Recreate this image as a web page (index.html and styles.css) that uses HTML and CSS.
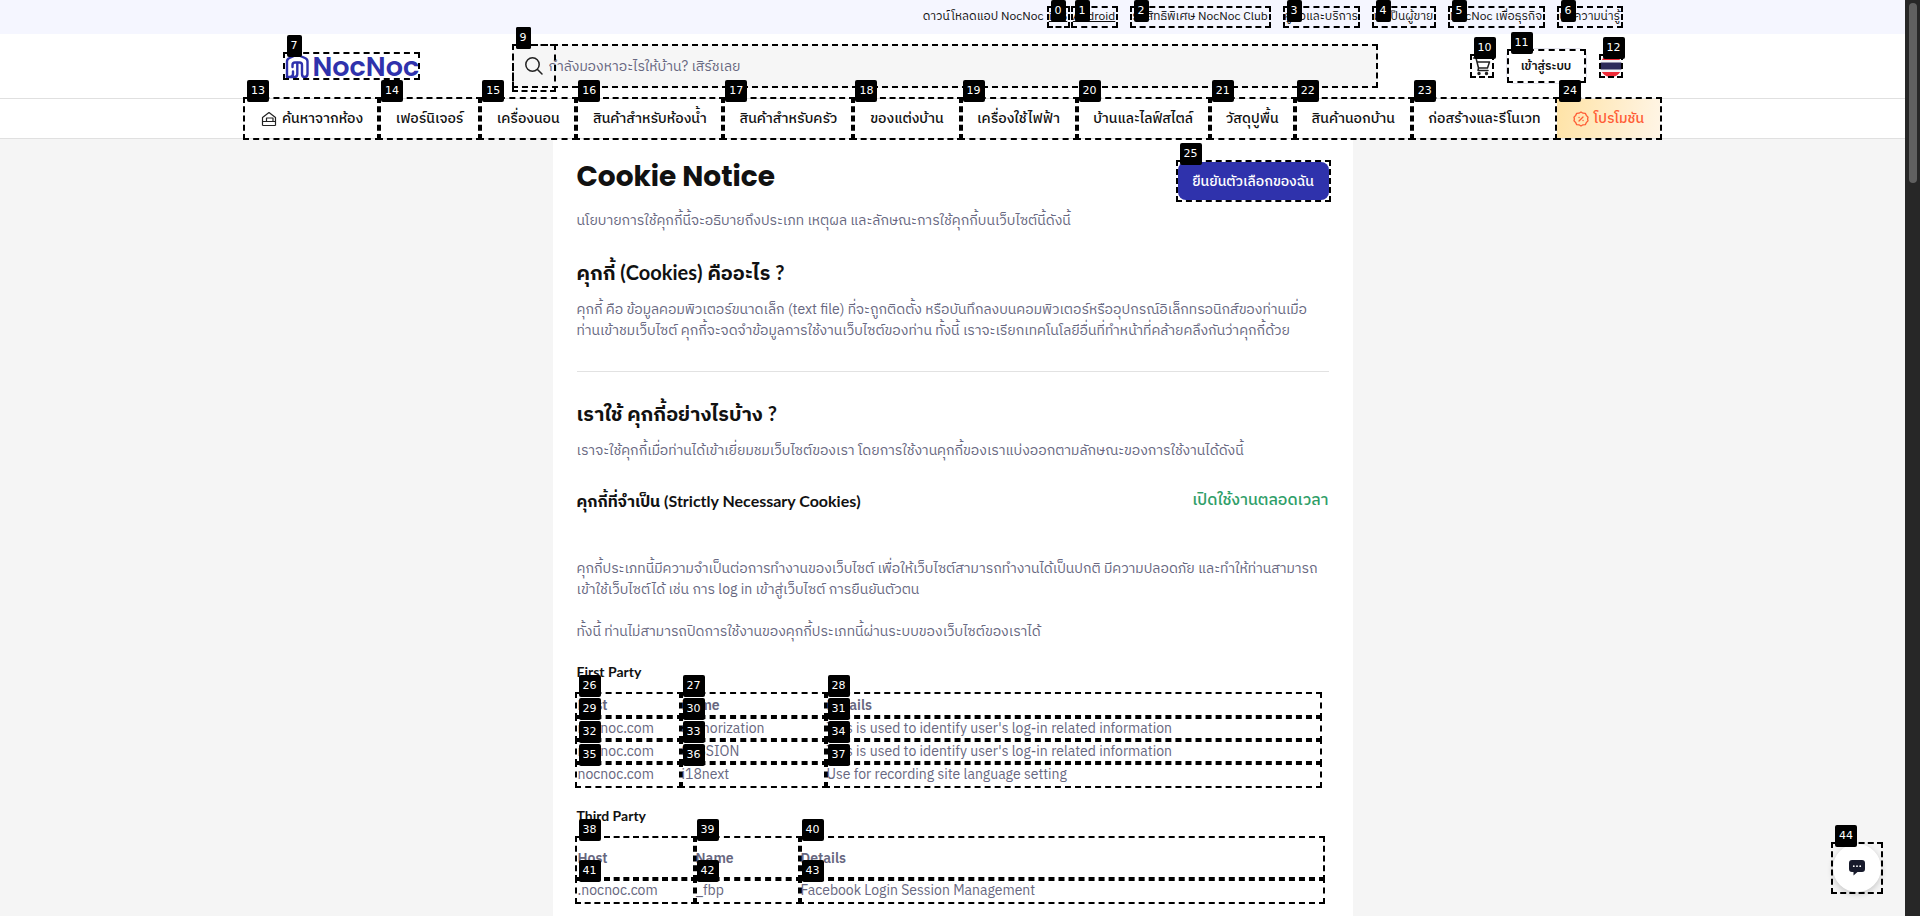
FILE: index.html
```html
<!DOCTYPE html>
<html lang="th">
<head>
<meta charset="utf-8">
<title>Cookie Notice | NocNoc</title>
<meta name="viewport" content="width=device-width, initial-scale=1">
<link rel="stylesheet" href="styles.css">
</head>
<body>
<div class="page">
  <div class="topbar">
    <div class="container topbar-row">
      <div class="apps">
        <span class="apps-label">ดาวน์โหลดแอป NocNoc</span>
        <a class="mark low top-a" href="#">iOS<span class="tag">0</span></a>
        <a class="mark low top-b" href="#">Android<span class="tag">1</span></a>
      </div>
      <a class="mark low top-c" href="#">รับสิทธิพิเศษ NocNoc Club<span class="tag">2</span></a>
      <a class="mark low top-d" href="#">คู่มือและบริการ<span class="tag">3</span></a>
      <a class="mark low top-e" href="#">มาเป็นผู้ขาย<span class="tag">4</span></a>
      <a class="mark low top-f" href="#">NocNoc เพื่อธุรกิจ<span class="tag">5</span></a>
      <a class="mark low top-g" href="#">บทความน่ารู้<span class="tag">6</span></a>
    </div>
  </div>

  <header class="header">
    <div class="container header-row">
      <a class="logo mark" href="#" aria-label="NocNoc">
        <svg class="logo-icon" viewBox="0 0 24 26" fill="none" stroke="#2f32ac" stroke-width="2.4" stroke-linejoin="round" stroke-linecap="round"><path d="M2 24V8.500Q2 6 4.500 5L10 2.500Q12 1.500 14 2.500L20 5Q22.500 6 22.500 8.500V21Q22.500 24 19.500 24Q17 24 17 21V12Q17 9.500 14.500 9.500H10Q7.500 9.500 7.500 12V14"/><path d="M2 24H4.500Q8 24 8 21V18.500M12.300 10V21Q12.300 24 9.500 24H4.500"/></svg>
        <span class="logo-text">NocNoc</span>
        <span class="tag">7</span>
      </a>
      <form class="search mark">
        <span class="tag">8</span>
        <button class="search-btn mark" type="button" aria-label="ค้นหา">
          <svg width="20" height="20" viewBox="0 0 20 20" fill="none" stroke="#222" stroke-width="1.500" stroke-linecap="round"><circle cx="8.500" cy="8.500" r="6.700"/><path d="M13.500 13.500L18 18"/></svg>
          <span class="tag">9</span>
        </button>
        <input class="search-input" type="text" aria-label="ค้นหาสินค้า" placeholder="กำลังมองหาอะไรให้บ้าน? เสิร์ชเลย">
      </form>
      <div class="actions">
        <a class="icon-link mark" href="#" aria-label="ตะกร้า">
          <svg width="20" height="20" viewBox="0 0 20 20" fill="none" stroke="#222" stroke-width="1.500" stroke-linejoin="round" stroke-linecap="round"><path d="M1.500 2H4L6.500 12H15.500L17.500 6H5M6.500 12L6 14.500H16"/><circle cx="7" cy="17.500" r="1" fill="#222"/><circle cx="14.500" cy="17.500" r="1" fill="#222"/></svg>
          <span class="tag">10</span>
        </a>
        <button class="login mark" type="button">เข้าสู่ระบบ<span class="tag">11</span></button>
        <a class="icon-link mark" href="#" aria-label="ไทย">
          <svg width="22" height="22" viewBox="0 0 22 22"><clipPath id="flag"><circle cx="11" cy="11" r="11"/></clipPath><g clip-path="url(#flag)"><path fill="#f2f2f6" d="M0 0h22v22H0z"/><path fill="#ef2b37" d="M0 0h22v5H0zM0 17h22v5H0z"/><path fill="#2d2a5a" d="M0 7.500h22v7H0z"/></g></svg>
          <span class="tag">12</span>
        </a>
      </div>
    </div>
  </header>

  <nav class="nav">
    <div class="nav-row">
      <a class="mark outer" href="#"><svg width="16" height="16" viewBox="0 0 16 16" fill="none" stroke="#222" stroke-width="1.200" stroke-linejoin="round"><path d="M1.500 14.500V6.500L8 1.500L14.500 6.500V14.500M1.500 10.500H14.500M1.500 14.500H14.500M5.500 10.500V7H12V10.500"/></svg>ค้นหาจากห้อง<span class="tag">13</span></a>
      <a class="mark outer" href="#">เฟอร์นิเจอร์<span class="tag">14</span></a>
      <a class="mark outer" href="#">เครื่องนอน<span class="tag">15</span></a>
      <a class="mark outer" href="#">สินค้าสำหรับห้องน้ำ<span class="tag">16</span></a>
      <a class="mark outer" href="#">สินค้าสำหรับครัว<span class="tag">17</span></a>
      <a class="mark outer" href="#">ของแต่งบ้าน<span class="tag">18</span></a>
      <a class="mark outer" href="#">เครื่องใช้ไฟฟ้า<span class="tag">19</span></a>
      <a class="mark outer" href="#">บ้านและไลฟ์สไตล์<span class="tag">20</span></a>
      <a class="mark outer" href="#">วัสดุปูพื้น<span class="tag">21</span></a>
      <a class="mark outer" href="#">สินค้านอกบ้าน<span class="tag">22</span></a>
      <a class="mark outer" href="#">ก่อสร้างและรีโนเวท<span class="tag">23</span></a>
      <a class="mark outer promo" href="#"><svg width="16" height="16" viewBox="0 0 16 16" fill="none" stroke="#ff5c35" stroke-width="1.300" stroke-linecap="round"><path stroke-linejoin="round" d="M8 1l2 1.200 2.300.100 1 2.100L15 6.300 14.600 8l.4 1.700-1.700 1.900-1 2.100-2.300.100L8 15l-2-1.200-2.300-.1-1-2.100L1 9.700 1.400 8 1 6.300l1.700-1.900 1-2.100L6 2.200z"/><path d="M6 10l4-4M6 6.500h.1M10 9.500h.1"/></svg>โปรโมชัน<span class="tag">24</span></a>
    </div>
  </nav>

  <main class="card">
    <div class="title-row">
      <h1>Cookie Notice</h1>
      <button class="confirm mark outer" type="button">ยืนยันตัวเลือกของฉัน<span class="tag">25</span></button>
    </div>
    <p class="intro">นโยบายการใช้คุกกี้นี้จะอธิบายถึงประเภท เหตุผล และลักษณะการใช้คุกกี้บนเว็บไซต์นี้ดังนี้</p>

    <h2>คุกกี้ (Cookies) คืออะไร ?</h2>
    <p>คุกกี้ คือ ข้อมูลคอมพิวเตอร์ขนาดเล็ก (text file) ที่จะถูกติดตั้ง หรือบันทึกลงบนคอมพิวเตอร์หรืออุปกรณ์อิเล็กทรอนิกส์ของท่านเมื่อ<br>ท่านเข้าชมเว็บไซต์ คุกกี้จะจดจำข้อมูลการใช้งานเว็บไซต์ของท่าน ทั้งนี้ เราจะเรียกเทคโนโลยีอื่นที่ทำหน้าที่คล้ายคลึงกันว่าคุกกี้ด้วย</p>
    <hr>
    <h2>เราใช้ คุกกี้อย่างไรบ้าง ?</h2>
    <p>เราจะใช้คุกกี้เมื่อท่านได้เข้าเยี่ยมชมเว็บไซต์ของเรา โดยการใช้งานคุกกี้ของเราแบ่งออกตามลักษณะของการใช้งานได้ดังนี้</p>

    <div class="type-row">
      <h3>คุกกี้ที่จำเป็น (Strictly Necessary Cookies)</h3>
      <span class="always-on">เปิดใช้งานตลอดเวลา</span>
    </div>
    <p>คุกกี้ประเภทนี้มีความจำเป็นต่อการทำงานของเว็บไซต์ เพื่อให้เว็บไซต์สามารถทำงานได้เป็นปกติ มีความปลอดภัย และทำให้ท่านสามารถ<br>เข้าใช้เว็บไซต์ได้ เช่น การ log in เข้าสู่เว็บไซต์ การยืนยันตัวตน</p>
    <p class="spaced">ทั้งนี้ ท่านไม่สามารถปิดการใช้งานของคุกกี้ประเภทนี้ผ่านระบบของเว็บไซต์ของเราได้</p>

    <h4>First Party</h4>
    <table class="first">
      <colgroup><col class="f-host"><col class="f-name"><col></colgroup>
      <tr><th class="mark outer">Host<span class="tag">26</span></th><th class="mark outer">Name<span class="tag">27</span></th><th class="mark outer">Details<span class="tag">28</span></th></tr>
      <tr><td class="mark outer">nocnoc.com<span class="tag">29</span></td><td class="mark outer">authorization<span class="tag">30</span></td><td class="mark outer">This is used to identify user's log-in related information<span class="tag">31</span></td></tr>
      <tr><td class="mark outer">nocnoc.com<span class="tag">32</span></td><td class="mark outer">SESSION<span class="tag">33</span></td><td class="mark outer">This is used to identify user's log-in related information<span class="tag">34</span></td></tr>
      <tr><td class="mark outer">nocnoc.com<span class="tag">35</span></td><td class="mark outer">i18next<span class="tag">36</span></td><td class="mark outer">Use for recording site language setting<span class="tag">37</span></td></tr>
    </table>

    <h4>Third Party</h4>
    <table class="third">
      <colgroup><col class="t-host"><col class="t-name"><col></colgroup>
      <tr><th class="mark outer">Host<span class="tag">38</span></th><th class="mark outer">Name<span class="tag">39</span></th><th class="mark outer">Details<span class="tag">40</span></th></tr>
      <tr><td class="mark outer">.nocnoc.com<span class="tag">41</span></td><td class="mark outer">_fbp<span class="tag">42</span></td><td class="mark outer">Facebook Login Session Management<span class="tag">43</span></td></tr>
    </table>
  </main>
</div>

<div class="scrollbar"><div class="thumb"></div></div>

<button class="chat mark" type="button" aria-label="แชท">
  <span class="chat-disc"><svg width="16" height="16" viewBox="0 0 16 16"><path fill="#171a2b" d="M3 0h10q3 0 3 3v6q0 3-3 3H8.500L4.500 15.500V12H3Q0 12 0 9V3Q0 0 3 0z"/><g fill="#fff"><circle cx="4.800" cy="6.200" r=".9"/><circle cx="8" cy="6.200" r=".9"/><circle cx="11.200" cy="6.200" r=".9"/></g></svg></span>
  <span class="tag">44</span>
</button>
</body>
</html>
```
FILE: styles.css
```css
* { box-sizing: border-box; }

body {
  margin: 0;
  height: 100vh;
  overflow: hidden;
  display: grid;
  grid-template-columns: 1fr 15px;
  background: #f5f5f5;
  color: #111;
  font: 14px/21px "IBM Plex Sans Thai", "Noto Sans Thai", Roboto, sans-serif;
}

a { color: inherit; text-decoration: none; }
button, input { font: inherit; color: inherit; }
h1, h2, h3, h4, p { margin: 0; }

.page { min-width: 0; height: 100vh; overflow: hidden; }

.container {
  max-width: 1340px;
  margin: 0 auto;
}

/* Numbered dashed outlines */
.mark { position: relative; }
.mark::after {
  content: "";
  position: absolute;
  inset: 0;
  border: 2px dashed #000;
  pointer-events: none;
}
.tag {
  position: absolute;
  z-index: 2;
  left: 4px;
  top: -17px;
  padding: 0 4px;
  border-radius: 2px;
  background: #000;
  color: #fff;
  font: 11px/22px "DejaVu Sans", sans-serif;
}
.outer::after { inset: -2px; }
.outer .tag { left: 2px; top: -19px; }
.low .tag { top: -6px; }

.topbar { background: #f5f6ff; }
.topbar-row {
  display: flex;
  justify-content: flex-end;
  gap: 12px;
  height: 34px;
  padding-top: 6px;
  font-size: 12px;
  white-space: nowrap;
}
.topbar-row .mark { display: block; height: 22px; text-align: center; }
.apps { display: flex; gap: 1px; }
.apps-label { padding-right: 2px; }
.apps a { text-decoration: underline; }
.top-a { width: 23px; }
.top-b { width: 47px; }
.top-c { width: 141px; }
.top-d { width: 77px; }
.top-e { width: 64px; }
.top-f { width: 97px; }
.top-g { width: 66px; }

.header { background: #fff; border-bottom: 1px solid #e0e0e0; }
.header-row {
  display: flex;
  align-items: center;
  height: 64px;
}
.logo {
  display: flex;
  align-items: center;
  gap: 4px;
  width: 137px;
  height: 28px;
  padding-left: 2px;
  color: #2f32ac;
}
.logo-icon { width: 24px; height: 26px; flex: none; }
.logo-text { font: 600 27px/28px Poppins, Lato, sans-serif; padding-top: 2px; }

.search {
  display: flex;
  flex: 1;
  align-items: flex-start;
  height: 44px;
  margin: 0 92px;
  border-radius: 8px;
  background: #f6f6f6;
}
.search-btn {
  flex: none;
  width: 44px;
  height: 48px;
  padding: 0 0 6px;
  border: 0;
  background: none;
}
.search-btn svg { vertical-align: middle; }
.search-input {
  flex: 1;
  height: 44px;
  margin-left: -7px;
  padding: 0;
  border: 0;
  outline: 0;
  background: none;
}
.search-input::placeholder { color: #676780; opacity: 1; }

.actions { display: flex; align-items: center; gap: 12px; }
.icon-link {
  display: grid;
  place-items: center;
  width: 24px;
  height: 24px;
}
.login {
  width: 81px;
  height: 36px;
  padding: 0;
  border: 1px solid #e4e4ee;
  border-radius: 8px;
  background: #fff;
  font-size: 12px;
  font-weight: 600;
}

.nav { background: #fff; border-bottom: 1px solid #e0e0e0; }
.nav-row {
  display: grid;
  grid-template-columns: 134fr 101fr 96fr 147fr 130fr 107fr 116fr 133fr 85fr 117fr 145fr 103fr;
  max-width: 1415px;
  height: 39px;
  margin: 0 auto;
  font-weight: 500;
}
.nav-row a {
  display: flex;
  align-items: center;
  justify-content: center;
  gap: 5px;
  white-space: nowrap;
}
.nav-row svg { flex: none; }
.promo {
  background: linear-gradient(100deg, #ffe3a6, #fff5e6);
  color: #ff5c35;
}

.card {
  max-width: 800px;
  min-height: 800px;
  margin: 0 auto;
  padding: 23px 24px;
  background: #fff;
}
.title-row {
  display: flex;
  align-items: flex-start;
  justify-content: space-between;
  height: 39px;
}
h1 { font: 700 28px/30px Poppins, Inter, sans-serif; }
.confirm {
  width: 151px;
  height: 38px;
  border: 0;
  border-radius: 8px;
  padding: 0;
  background: #2f32ac;
  color: #fff;
  font-weight: 500;
}
.card p { color: #676780; white-space: nowrap; }
.intro { margin-top: 9px; }
h2, h3, h4 { font-family: Lato, "IBM Plex Sans Thai", "Noto Sans Thai", sans-serif; font-weight: 700; }
h2 { margin: 27px 0 13px; font-size: 20px; line-height: 28px; }
hr { margin: 30px 0 0; border: 0; border-top: 1px solid #e2e2e2; }
.type-row {
  display: flex;
  align-items: center;
  justify-content: space-between;
  margin: 28px 0 45px;
  line-height: 24px;
}
h3 { font-size: 16px; }
.always-on { color: #2f9e68; font-size: 16px; font-weight: 500; }
.card .spaced { margin-top: 21px; }

h4 { margin-top: 19px; font-size: 14px; }
table {
  margin-top: 12px;
  border-collapse: collapse;
  table-layout: fixed;
  color: #676780;
}
.first { width: 743px; }
.third { width: 746px; }
.f-host { width: 104px; }
.f-name { width: 145px; }
.t-host { width: 118px; }
.t-name { width: 105px; }
th, td { height: 23px; padding: 1px; text-align: left; }
th { font-weight: 600; }
.third th { height: 41px; }

.scrollbar {
  height: 100vh;
  padding: 3px 3px 0 4px;
  background: #272727;
}
.thumb { height: 180px; border-radius: 4px; background: #606060; }

/* Floating chat launcher */
.chat {
  position: fixed;
  right: 37px;
  bottom: 22px;
  width: 52px;
  height: 52px;
  padding: 2px;
  border: 0;
  background: none;
}
.chat-disc {
  display: grid;
  place-items: center;
  height: 48px;
  border-radius: 50%;
  background: #fff;
  box-shadow: 0 2px 6px rgba(0, 0, 0, 0.2);
}
```
